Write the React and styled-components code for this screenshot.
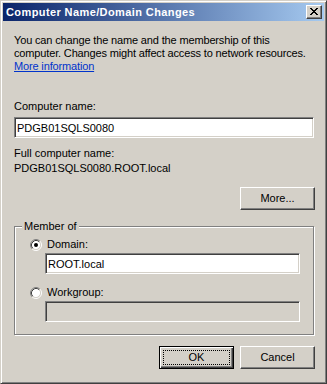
import React from "react";
import styled, { createGlobalStyle, css } from "styled-components";

const Global = createGlobalStyle`
  html, body { margin: 0; padding: 0; background: #D4D0C8; }
  body { font-family: "Liberation Sans", Arial, sans-serif; font-size: 11px; }
  * { box-sizing: border-box; }
`;

const Window = styled.div`
  width: 327px;
  height: 384px;
  background: #D4D0C8;
  border: 1px solid;
  border-color: #D4D0C8 #404040 #404040 #D4D0C8;
  box-shadow: inset 1px 1px #fff, inset -1px -1px #808080;
  padding: 2px;
  display: flex;
  flex-direction: column;
  color: #000;
`;

const TitleBar = styled.div`
  height: 18px;
  background: linear-gradient(to right, #0A246A, #A6CAF0);
  display: flex;
  align-items: center;
  padding: 0 2px 0 3px;
`;

const Title = styled.div`
  flex: 1;
  color: #fff;
  font-weight: bold;
  font-size: 11px;
  letter-spacing: 0.4px;
  font-family: "Liberation Sans", Arial, sans-serif;
  white-space: nowrap;
`;

const bevel = css`
  background: #D4D0C8;
  border: 1px solid;
  border-color: #fff #404040 #404040 #fff;
  box-shadow: inset -1px -1px #808080;
`;

const CloseButton = styled.div`
  ${bevel};
  width: 16px;
  height: 14px;
  display: flex;
  align-items: center;
  justify-content: center;
  padding: 0 1px 1px 0;
`;

const Content = styled.div`
  flex: 1;
  display: flex;
  flex-direction: column;
  padding: 13px 9px 0 11px;
  line-height: 13px;
`;

const Para = styled.div`
  line-height: 13px;
  letter-spacing: -0.15px;
`;

const Link = styled.span`
  color: #0033CC;
  text-decoration: underline;
`;

const Label = styled.div`
  margin-top: ${(p) => p.$mt || 0}px;
  line-height: 13px;
`;

const Field = styled.input`
  display: block;
  height: 21px;
  margin: ${(p) => p.$mt || 0}px ${(p) => p.$mr || 0}px 0 ${(p) => p.$ml || 0}px;
  padding: 0 2px;
  font-family: "Liberation Sans", Arial, sans-serif;
  font-size: 11px;
  color: #000;
  background: ${(p) => (p.disabled ? "#D4D0C8" : "#fff")};
  border: 1px solid;
  border-color: #808080 #fff #fff #808080;
  box-shadow: inset 1px 1px #404040, inset -1px -1px #D4D0C8;
  outline: none;
`;

const ButtonRow = styled.div`
  display: flex;
  justify-content: flex-end;
  gap: 6px;
  margin-top: ${(p) => p.$mt || 0}px;
`;

const Button = styled.div`
  ${bevel};
  position: relative;
  width: 75px;
  height: 23px;
  display: flex;
  align-items: center;
  justify-content: center;
  line-height: 13px;
  ${(p) =>
    p.$default &&
    css`
      border: 1px solid #000;
      box-shadow: inset 1px 1px #fff, inset -1px -1px #404040, inset -2px -2px #808080;
      &::after {
        content: "";
        position: absolute;
        inset: 3px;
        border: 1px dotted #000;
      }
    `}
`;

const Group = styled.div`
  position: relative;
  margin-top: 16px;
  margin-right: 1px;
  border: 1px solid #808080;
  box-shadow: inset 1px 1px #fff, 1px 1px #fff;
  padding: 11px 0 12px 0;
  display: flex;
  flex-direction: column;
`;

const Legend = styled.span`
  position: absolute;
  top: -7px;
  left: 7px;
  padding: 0 2px;
  background: #D4D0C8;
  line-height: 13px;
`;

const RadioRow = styled.div`
  display: flex;
  align-items: center;
  gap: 5px;
  height: 13px;
  padding-left: 15px;
  margin-top: ${(p) => p.$mt || 0}px;
`;

function CloseGlyph() {
  const rects = [
    [0, 0, 2], [6, 0, 2],
    [1, 1, 2], [5, 1, 2],
    [2, 2, 4],
    [3, 3, 2],
    [2, 4, 4],
    [1, 5, 2], [5, 5, 2],
    [0, 6, 2], [6, 6, 2],
  ];
  return (
    <svg width="8" height="7" viewBox="0 0 8 7" shapeRendering="crispEdges">
      {rects.map(([x, y, w], i) => (
        <rect key={i} x={x} y={y} width={w} height="1" fill="#000" />
      ))}
    </svg>
  );
}

function Radio({ checked }) {
  return (
    <svg width="12" height="12" viewBox="0 0 12 12">
      <circle cx="6" cy="6" r="4.5" fill="#fff" />
      <path d="M2.11 9.89 A5.5 5.5 0 0 1 9.89 2.11" stroke="#808080" fill="none" />
      <path d="M9.89 2.11 A5.5 5.5 0 0 1 2.11 9.89" stroke="#fff" fill="none" />
      <path d="M2.82 9.18 A4.5 4.5 0 0 1 9.18 2.82" stroke="#404040" fill="none" />
      <path d="M9.18 2.82 A4.5 4.5 0 0 1 2.82 9.18" stroke="#D4D0C8" fill="none" />
      {checked && <circle cx="6" cy="6" r="2" fill="#000" />}
    </svg>
  );
}

export default function App() {
  return (
    <>
      <Global />
      <Window>
        <TitleBar>
          <Title>Computer Name/Domain Changes</Title>
          <CloseButton>
            <CloseGlyph />
          </CloseButton>
        </TitleBar>
        <Content>
          <Para>
            You can change the name and the membership of this
            <br />
            computer. Changes might affect access to network resources.
            <br />
            <Link>More information</Link>
          </Para>
          <Label $mt={27}>Computer name:</Label>
          <Field $mt={4} $mr={1} readOnly defaultValue="PDGB01SQLS0080" />
          <Label $mt={9}>Full computer name:</Label>
          <Label $mt={2}>PDGB01SQLS0080.ROOT.local</Label>
          <ButtonRow $mt={12}>
            <Button>More...</Button>
          </ButtonRow>
          <Group>
            <Legend>Member of</Legend>
            <RadioRow>
              <Radio checked />
              <span>Domain:</span>
            </RadioRow>
            <Field $mt={2} $ml={30} $mr={13} readOnly defaultValue="ROOT.local" />
            <RadioRow $mt={12}>
              <Radio />
              <span>Workgroup:</span>
            </RadioRow>
            <Field $mt={2} $ml={30} $mr={13} disabled defaultValue="" />
          </Group>
          <ButtonRow $mt={11}>
            <Button $default>OK</Button>
            <Button>Cancel</Button>
          </ButtonRow>
        </Content>
      </Window>
    </>
  );
}
